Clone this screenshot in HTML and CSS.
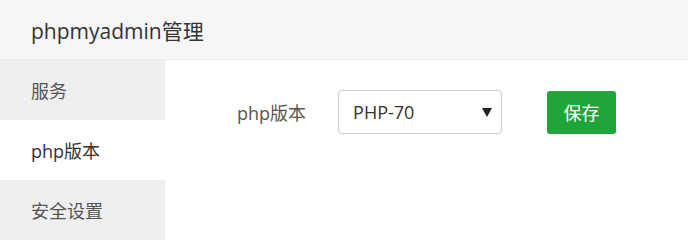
FILE: index.html
```html
<!DOCTYPE html>
<html lang="zh-CN">
<head>
<meta charset="utf-8">
<title>phpmyadmin管理</title>
<link rel="stylesheet" href="styles.css">
</head>
<body>
<div class="panel">
  <div class="panel-header">phpmyadmin管理</div>
  <div class="panel-body">
    <ul class="side-menu">
      <li class="side-item">服务</li>
      <li class="side-item active">php版本</li>
      <li class="side-item">安全设置</li>
    </ul>
    <div class="content">
      <div class="form-row">
        <span class="form-label">php版本</span>
        <div class="select-wrap">
          <select class="select">
            <option>PHP-70</option>
          </select>
        </div>
        <button class="btn-save" type="button">保存</button>
      </div>
    </div>
  </div>
</div>
</body>
</html>
```
FILE: styles.css
```css
* { box-sizing: border-box; }
html, body { margin: 0; padding: 0; background: #fff; }
body {
  font-family: "Open Sans", "Noto Sans CJK SC", sans-serif;
  color: #333;
}
.panel { width: 688px; height: 240px; overflow: hidden; }
.panel-header {
  height: 60px;
  background: #f6f6f6;
  border-bottom: 1px solid #ececec;
  padding-left: 31px;
  display: flex;
  align-items: center;
  font-size: 21px;
  color: #333;
}
.panel-body { display: flex; height: 180px; }
.side-menu {
  list-style: none;
  margin: 0;
  padding: 0;
  width: 165px;
  flex: none;
}
.side-item {
  height: 60px;
  display: flex;
  align-items: center;
  padding-left: 31px;
  background: #efefef;
  font-size: 18px;
  color: #555;
}
.side-item.active { background: #fff; color: #333; }
.content { flex: 1; padding: 30px 0 0 72px; }
.form-row { display: flex; align-items: center; }
.form-label {
  font-size: 18px;
  color: #555;
  margin-right: 32px;
}
.select-wrap { position: relative; width: 164px; height: 44px; margin-right: 45px; }
.select {
  appearance: none;
  -webkit-appearance: none;
  width: 100%;
  height: 100%;
  border: 1px solid #ccc;
  border-radius: 4px;
  background: #fff;
  padding: 0 0 0 14px;
  font-family: "Open Sans", "Noto Sans CJK SC", sans-serif;
  font-size: 18px;
  color: #333;
}
.select-wrap::after {
  content: "";
  position: absolute;
  right: 10px;
  top: 18px;
  border-left: 5px solid transparent;
  border-right: 5px solid transparent;
  border-top: 9px solid #222;
  pointer-events: none;
}
.btn-save {
  width: 69px;
  height: 43px;
  border: none;
  border-radius: 3px;
  background: #20a53a;
  color: #fff;
  font-family: "Noto Sans CJK SC", sans-serif;
  font-size: 18px;
  padding: 0;
}
```
